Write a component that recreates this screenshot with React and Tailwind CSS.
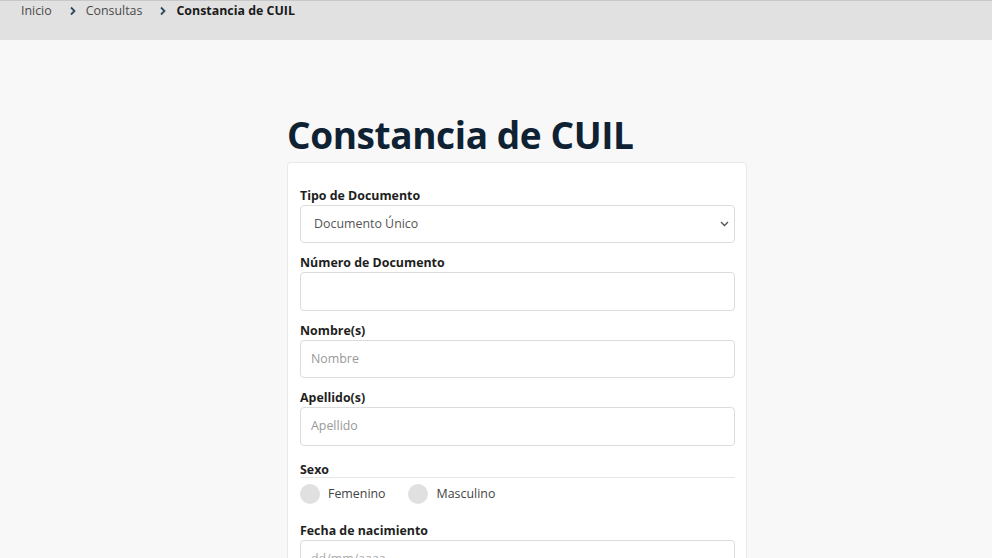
import React from "react";

function Chevron() {
  return (
    <svg width="8" height="10" viewBox="0 0 8 10">
      <path d="M2 1.5 L5.5 5 L2 8.5" fill="none" stroke="#2b4a60" strokeWidth="1.8" />
    </svg>
  );
}

function Label({ children }) {
  return <div className="text-[12.4px] font-bold leading-[18px] text-[#1e1e1e]">{children}</div>;
}

export default function App() {
  return (
    <div className="min-h-[558px] bg-[#f8f8f8]" style={{ fontFamily: '"Open Sans", "Noto Sans", sans-serif' }}>
      <div className="h-[40px] bg-[#e1e1e1] border-t border-[#c8c8c8] flex items-start pl-[21px] pt-[1px] text-[12.4px] leading-[18px]">
        <span className="text-[#4a4a4a]">Inicio</span>
        <div className="h-[18px] flex items-center ml-[17px] mr-[9px]"><Chevron /></div>
        <span className="text-[#4a4a4a]">Consultas</span>
        <div className="h-[18px] flex items-center ml-[17px] mr-[9px]"><Chevron /></div>
        <span className="font-bold text-[#1a1a1a]">Constancia de CUIL</span>
      </div>
      <div className="w-[460px] ml-[287px] pt-[67px]">
        <h1 className="text-[37px] font-bold leading-[55px] text-[#0f2233] tracking-[-0.4px]">Constancia de CUIL</h1>
        <div className="bg-white border border-[#e9e9e9] rounded-[4px] pt-[24px] pl-[12px] pr-[11px] pb-[20px]">
          <Label>Tipo de Documento</Label>
          <div className="relative h-[38px] border border-[#dcdcdc] rounded-[4px] flex items-center pl-[13px] text-[12.4px] text-[#555]">
            Documento Único
            <svg className="absolute right-[5px] top-[15px]" width="9" height="6" viewBox="0 0 9 6">
              <path d="M1 1 L4.5 4.5 L8 1" fill="none" stroke="#555" strokeWidth="1.4" />
            </svg>
          </div>
          <div className="mt-[11px]">
            <Label>Número de Documento</Label>
            <div className="h-[39px] border border-[#dcdcdc] rounded-[4px]"></div>
          </div>
          <div className="mt-[11px]">
            <Label>Nombre(s)</Label>
            <div className="h-[38px] border border-[#dcdcdc] rounded-[4px] flex items-center pl-[10px] text-[12.4px] text-[#999]">Nombre</div>
          </div>
          <div className="mt-[11px]">
            <Label>Apellido(s)</Label>
            <div className="h-[39px] border border-[#dcdcdc] rounded-[4px] flex items-center pl-[10px] text-[12.4px] text-[#999]">Apellido</div>
          </div>
          <div className="mt-[16px]">
            <div className="border-b border-[#e6e6e6] text-[12.4px] font-bold leading-[15px] text-[#1e1e1e]">Sexo</div>
            <div className="flex items-center mt-[5px] h-[22px] text-[12.4px] text-[#444]">
              <span className="w-[20px] h-[20px] rounded-full bg-[#e0e0e0]"></span>
              <span className="ml-[8px]">Femenino</span>
              <span className="ml-[22px] w-[20px] h-[20px] rounded-full bg-[#e0e0e0]"></span>
              <span className="ml-[9px]">Masculino</span>
            </div>
          </div>
          <div className="mt-[17px]">
            <Label>Fecha de nacimiento</Label>
            <div className="h-[38px] border border-[#dcdcdc] rounded-[4px] flex items-start pt-[9px] pl-[10px] text-[12.4px] text-[#aaa]">dd/mm/aaaa</div>
          </div>
        </div>
      </div>
    </div>
  );
}
